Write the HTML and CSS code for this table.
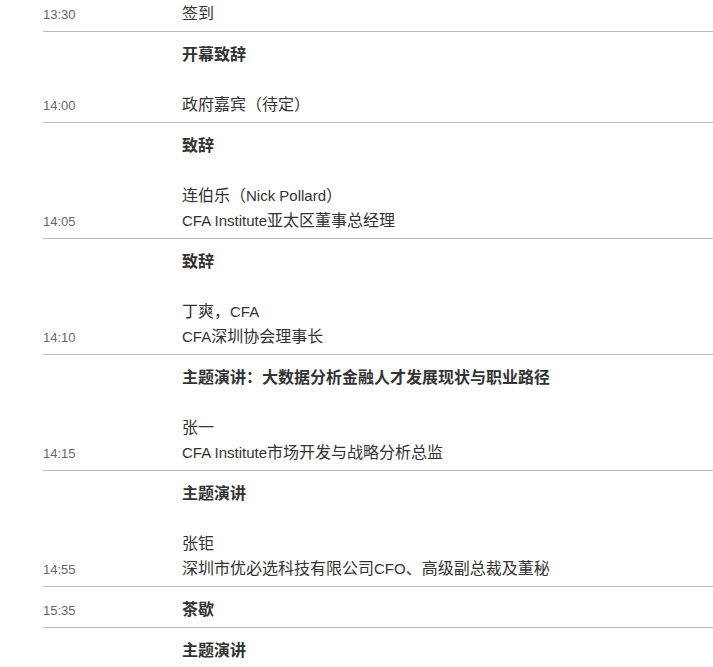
FILE: index.html
```html
<!DOCTYPE html>
<html lang="zh-CN">
<head>
<meta charset="utf-8">
<title>议程</title>
<link rel="stylesheet" href="styles.css">
</head>
<body>
<div class="schedule">
  <div class="row">
    <div class="time">13:30</div>
    <div class="talk"><div class="line">签到</div></div>
  </div>
  <div class="row">
    <div class="time">14:00</div>
    <div class="talk">
      <div class="topic">开幕致辞</div>
      <div class="speaker"><div class="line">政府嘉宾（待定）</div></div>
    </div>
  </div>
  <div class="row">
    <div class="time">14:05</div>
    <div class="talk">
      <div class="topic">致辞</div>
      <div class="speaker">
        <div class="line">连伯乐（<span class="en">Nick Pollard</span>）</div>
        <div class="line"><span class="en">CFA Institute</span>亚太区董事总经理</div>
      </div>
    </div>
  </div>
  <div class="row">
    <div class="time">14:10</div>
    <div class="talk">
      <div class="topic">致辞</div>
      <div class="speaker">
        <div class="line">丁爽，<span class="en">CFA</span></div>
        <div class="line"><span class="en">CFA</span>深圳协会理事长</div>
      </div>
    </div>
  </div>
  <div class="row">
    <div class="time">14:15</div>
    <div class="talk">
      <div class="topic">主题演讲：大数据分析金融人才发展现状与职业路径</div>
      <div class="speaker">
        <div class="line">张一</div>
        <div class="line"><span class="en">CFA Institute</span>市场开发与战略分析总监</div>
      </div>
    </div>
  </div>
  <div class="row">
    <div class="time">14:55</div>
    <div class="talk">
      <div class="topic">主题演讲</div>
      <div class="speaker">
        <div class="line">张钜</div>
        <div class="line">深圳市优必选科技有限公司<span class="en">CFO</span>、高级副总裁及董秘</div>
      </div>
    </div>
  </div>
  <div class="row">
    <div class="time">15:35</div>
    <div class="talk"><div class="topic">茶歇</div></div>
  </div>
  <div class="row">
    <div class="time"></div>
    <div class="talk">
      <div class="topic">主题演讲</div>
      <div class="speaker">
        <div class="line">&nbsp;</div>
        <div class="line">&nbsp;</div>
      </div>
    </div>
  </div>
</div>
</body>
</html>
```

FILE: styles.css
```css
html, body {
  margin: 0;
  padding: 0;
  background: #fff;
  overflow: hidden;
}

body {
  font-family: "Noto Sans CJK SC", "Liberation Sans", sans-serif;
  color: #333;
}

.schedule {
  margin: -9px 0 0 43px;
}

.row {
  display: grid;
  grid-template-columns: 139px 1fr;
  align-items: end;
  border-bottom: 1px solid #bcbcbc;
  padding: 9px 0 4px;
}

.time {
  font-family: "Liberation Sans", Arial, sans-serif;
  font-size: 13px;
  line-height: 25px;
  color: #666;
}

.talk {
  font-size: 16px;
  line-height: 25px;
  margin-bottom: 2px;
}

.topic {
  font-weight: bold;
  color: #333;
}

.speaker {
  margin-top: 25px;
}

.line {
  white-space: nowrap;
}

.en {
  font-family: "Liberation Sans", Arial, sans-serif;
  font-size: 15px;
  line-height: 20px;
}
```
